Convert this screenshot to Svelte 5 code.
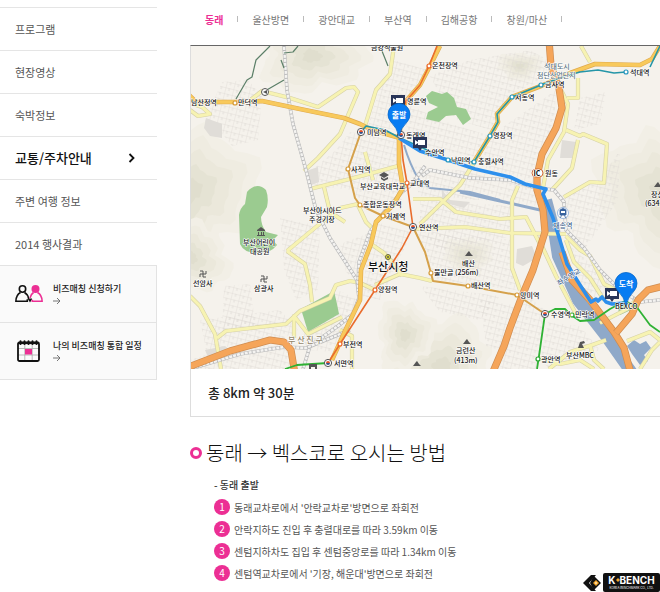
<script lang="ts">
	type Point = [number, number];

	const menu = ['프로그램', '현장영상', '숙박정보', '교통/주차안내', '주변 여행 정보', '2014 행사결과'];
	const activeMenu = '교통/주차안내';

	const origins = ['동래', '울산방면', '광안대교', '부산역', '김해공항', '창원/마산'];
	let origin = $state('동래');

	const steps = [
		"동래교차로에서 '안락교차로'방면으로 좌회전",
		'안락지하도 진입 후 충렬대로를 따라 3.59km 이동',
		'센텀지하차도 집입 후 센텀중앙로를 따라 1.34km 이동',
		"센텀역교차로에서 '기장, 해운대'방면으로 좌회전"
	];

	// blocks of small streets, filled with a rotated grid pattern
	const blocks = [
		'M222 82L248 80L262 96L258 140L232 146L218 128L204 124L212 104Z',
		'M430 76L470 60L530 50L548 60L545 80L510 94L490 130L452 118Z',
		'M394 60L428 70L400 106L398 130L368 126L378 94Z',
		'M400 100L440 120L490 136L480 158L440 150L410 140Z',
		'M490 136L556 90L554 128L538 160L536 184L480 166Z',
		'M350 132L396 140L402 200L370 212L352 190L314 186L312 170L336 150Z',
		'M408 166L480 172L534 190L538 206L480 200L420 196Z',
		'M420 200L510 206L512 236L440 250L420 232Z',
		'M376 222L412 232L380 300L362 296L368 250Z',
		'M416 232L512 240L516 290L436 280Z',
		'M480 300L520 306L506 352L486 346Z',
		'M520 290L545 310L537 369L500 369Z',
		'M548 322L580 326L600 350L550 369L540 360Z',
		'M560 196L600 180L620 150L618 200L584 250L568 230Z',
		'M280 218L320 226L318 290L296 300L284 270Z',
		'M200 320L280 310L298 330L284 338L206 350Z',
		'M224 286L250 284L256 330L222 330Z',
		'M190 360L220 350L286 344L292 369L190 369Z',
		'M338 290L358 300L350 324L330 352L310 350L300 338Z',
		'M580 98L606 92L600 124L574 130Z',
		'M340 244L372 232L360 285L346 272Z',
		'M420 286L500 296L480 320L440 312Z',
		'M570 246L610 280L600 300L582 290Z'
	];

	const yellowRoads = [
		'M190 110L198 116L210 114L202 107L190 103',
		'M248 102L262 91L290 98L318 107L346 88L354 87L358 92L340 134L318 158L304 171',
		'M394 46L390 74L376 90L365 126',
		'M310 189L350 179L398 166',
		'M324 187L330 212L345 222',
		'M287 251L322 222L340 208L358 204',
		'M365 152L370 170L373 180',
		'M190 296L200 306L215 334L221 369',
		'M217 338L226 331L286 324L300 311L330 298L336 285L350 281L360 283L375 290',
		'M287 251L305 264L310 285L312 302',
		'M294 338V316L308 334L342 317',
		'M375 285L400 274L420 278L432 281',
		'M371 244L384 253L392 262L402 276',
		'M340 330L352 336L352 369',
		'M474 163L460 185L420 224',
		'M413 199L440 199L456 212L500 219L526 217L541 246',
		'M413 229L465 227L510 233L566 234',
		'M518 186L512 200L512 268L520 290',
		'M358 205L366 222L374 230',
		'M566 130L580 136L583 134L607 144L604 183L590 182L564 197',
		'M578 140L572 168L552 190',
		'M556 80L568 104L564 132L548 160L543 188',
		'M581 46L590 62M578 78L578 98L567 98',
		'M541 244L556 276L578 318',
		'M566 240L574 262L590 278L604 300',
		'M566 236L580 250L590 256L604 284L620 292',
		'M600 323L627 309L640 296',
		'M549 369L570 352L592 345L606 340',
		'M538 358L560 364L580 360L594 369',
		'M640 369L652 350L660 342M590 345L594 360L604 369',
		'M627 341L650 332L660 340'
	];

	const goldRoads = [
		'M186 92L196 102L240 102L262 101L300 109L344 118L360 124L372 130L400 138',
		'M399 136L399 164L403 188L393 205L376 222L371 244L361 270L360 300L345 331L332 360',
		'M440 46L430 66L420 85L406 101L400 116L400 136',
		'M474 162L490 136L498 122L497 114L512 97L541 86L562 76L595 64L640 65L652 59L660 46'
	];

	const highways = [
		'M549 40L551 66L559 88L562 108L556 128L542 154L537 176L537 190L543 210L545 232L533 270L522 296L510 328L504 346L492 374',
		'M562 252L572 280L590 300L614 332L624 348L631 374',
		'M616 333L632 314L638 300L648 290L664 286',
		'M186 368L230 351L270 340L284 342L291 350L295 374'
	];

	const railways = [
		'M284 46L287 90L293 124L306 170L316 210L330 238L357 280L359 298L353 314L338 326L310 346L303 369',
		'M425 166L412 184L402 192L384 212L370 232L359 262L358 290',
		'M422 176L430 170L470 178L510 180L536 188L554 190L564 202L566 230L584 248L600 270L620 290L640 302L660 300',
		'M190 369L240 354L284 347L306 348L350 330'
	];

	// centre, radii and a phase that makes each outline irregular
	const hills = [
		{ x: 312, y: 56, rx: 52, ry: 36, phase: 1 },
		{ x: 190, y: 190, rx: 62, ry: 70, phase: 2 },
		{ x: 662, y: 192, rx: 62, ry: 68, phase: 4 },
		{ x: 468, y: 256, rx: 24, ry: 20, phase: 3 },
		{ x: 442, y: 366, rx: 52, ry: 46, phase: 5 },
		{ x: 405, y: 335, rx: 28, ry: 34, phase: 2 },
		{ x: 190, y: 258, rx: 40, ry: 34, phase: 6 },
		{ x: 520, y: 66, rx: 22, ry: 14, phase: 3 }
	];
	const hillLevels = [
		{ scale: 1, fill: '#f2efe6' },
		{ scale: 0.8, fill: '#efece1' },
		{ scale: 0.6, fill: '#ebe8db' },
		{ scale: 0.38, fill: '#e5e3d4' },
		{ scale: 0.18, fill: '#e0dece' }
	];

	function hillPath(x: number, y: number, rx: number, ry: number, phase: number) {
		const points = [];
		for (let i = 0; i < 48; i++) {
			const a = (i / 48) * Math.PI * 2;
			const r = 1 + 0.12 * Math.sin(3 * a + phase) + 0.09 * Math.sin(7 * a + phase * 2) + 0.05 * Math.sin(13 * a);
			points.push(`${(x + Math.cos(a) * rx * r).toFixed(1)} ${(y + Math.sin(a) * ry * r).toFixed(1)}`);
		}
		return 'M' + points.join('L') + 'Z';
	}

	const stations: { at: Point; color: string }[] = [
		{ at: [235, 103], color: '#d59a36' },
		{ at: [429, 66], color: '#ea6422' },
		{ at: [348, 169], color: '#d59a36' },
		{ at: [360, 205], color: '#d59a36' },
		{ at: [383, 216], color: '#d59a36' },
		{ at: [407, 183], color: '#ea6422' },
		{ at: [375, 290], color: '#ea6422' },
		{ at: [340, 344], color: '#ea6422' },
		{ at: [431, 273], color: '#d59a36' },
		{ at: [468, 286], color: '#d59a36' },
		{ at: [517, 295], color: '#d59a36' },
		{ at: [541, 85], color: '#2596be' },
		{ at: [512, 97], color: '#2596be' },
		{ at: [626, 72], color: '#2596be' },
		{ at: [490, 136], color: '#2596be' },
		{ at: [474, 162], color: '#2596be' },
		{ at: [448, 160], color: '#2596be' },
		{ at: [538, 359], color: '#27a72e' },
		{ at: [572, 315], color: '#27a72e' }
	];

	const transfers: Point[] = [
		[361, 132],
		[401, 135],
		[413, 227],
		[328, 363],
		[545, 314]
	];

	const labels: { at: Point; text: string }[] = [
		{ at: [371, 50], text: '금강식물원' },
		{ at: [432, 68], text: '온천장역' },
		{ at: [191, 105], text: '남산정역' },
		{ at: [238, 105], text: '만덕역' },
		{ at: [407, 104], text: '명륜역' },
		{ at: [630, 75], text: '석대역' },
		{ at: [545, 87], text: '금사역' },
		{ at: [515, 100], text: '서동역' },
		{ at: [367, 135], text: '미남역' },
		{ at: [406, 138], text: '동래역' },
		{ at: [493, 138], text: '명장역' },
		{ at: [425, 155], text: '수안역' },
		{ at: [451, 163], text: '낙민역' },
		{ at: [478, 164], text: '충렬사역' },
		{ at: [351, 172], text: '사직역' },
		{ at: [410, 186], text: '교대역' },
		{ at: [360, 189], text: '부산교육대학교' },
		{ at: [545, 176], text: '원동' },
		{ at: [363, 207], text: '종합운동장역' },
		{ at: [303, 213], text: '부산아시아드' },
		{ at: [309, 222], text: '주경기장' },
		{ at: [386, 219], text: '거제역' },
		{ at: [419, 230], text: '연산역' },
		{ at: [243, 245], text: '부산어린이' },
		{ at: [250, 254], text: '대공원' },
		{ at: [193, 286], text: '선암사' },
		{ at: [254, 291], text: '삼광사' },
		{ at: [378, 292], text: '양정역' },
		{ at: [343, 347], text: '부전역' },
		{ at: [334, 366], text: '서면역' },
		{ at: [462, 266], text: '배산' },
		{ at: [434, 275], text: '물만골' },
		{ at: [471, 288], text: '배산역' },
		{ at: [520, 298], text: '망미역' },
		{ at: [551, 317], text: '수영역' },
		{ at: [575, 317], text: '민락역' },
		{ at: [456, 353], text: '금련산' },
		{ at: [541, 362], text: '광안역' },
		{ at: [566, 358], text: '부산MBC' },
		{ at: [651, 197], text: '장산' }
	];

	const heights: { at: Point; text: string }[] = [
		{ at: [455, 275], text: '(256m)' },
		{ at: [454, 363], text: '(413m)' },
		{ at: [645, 206], text: '(634m)' }
	];

	const peaks: Point[] = [
		[469, 256],
		[467, 344],
		[417, 366],
		[658, 187]
	];

	const temples: Point[] = [
		[203, 274],
		[264, 279]
	];

	const cameras: Point[] = [
		[398, 101],
		[420, 143],
		[612, 294]
	];

	const pins: { at: Point; text: string }[] = [
		{ at: [399, 115], text: '출발' },
		{ at: [626, 284], text: '도착' }
	];
</script>

<div class="page">
	<aside class="side">
		<nav>
			<ul class="menu">
				{#each menu as item}
					<li class="menu__item">
						<a class="menu__link" class:menu__link--active={item === activeMenu} href="#menu">
							{item}
							{#if item === activeMenu}
								<svg class="menu__arrow" viewBox="0 0 8 10" aria-hidden="true">
									<path d="M1.5 1L5.5 5L1.5 9" fill="none" stroke="#111" stroke-width="1.8" />
								</svg>
							{/if}
						</a>
					</li>
				{/each}
			</ul>
		</nav>

		<a class="banner" href="#apply">
			<svg class="banner__icon" viewBox="0 0 28 24" aria-hidden="true">
				<g fill="none" stroke-width="1.6">
					<circle cx="7.5" cy="7" r="3.200" stroke="#111" />
					<path d="M5.500 10.500Q1 13 0.900 19.200H12.300V17.300M9.500 10.500Q13 12.500 13.500 16.500L15 19L16.500 16.500" stroke="#111" />
					<path d="M18.500 10.500Q15.500 12.500 15 16M22.500 10.500Q27 13 27.100 19.200H17.300V17.800" stroke="#ec2f94" />
				</g>
				<circle cx="20.5" cy="7" r="4" fill="#ec2f94" />
			</svg>
			<span class="banner__text">
				비즈매칭 신청하기
				<svg class="banner__arrow" viewBox="0 0 8 8" aria-hidden="true">
					<path d="M0 4H7M4 1L7 4L4 7" fill="none" stroke="#666" stroke-width="0.9" />
				</svg>
			</span>
		</a>
		<a class="banner" href="#calendar">
			<svg class="banner__icon" viewBox="0 0 28 24" aria-hidden="true">
				<path d="M3 9.500H24M3 16H24M9.800 5V21M17.200 5V21" stroke="#aaa" stroke-width="0.8" />
				<rect x="10" y="10" width="7" height="5.500" fill="#ec2f94" />
				<rect x="3" y="3.500" width="21" height="18.500" rx="1.5" fill="none" stroke="#111" stroke-width="1.8" />
				<path d="M3 4H24" stroke="#111" stroke-width="2.2" />
				<path d="M5.500 2.200V5M9.500 2.200V5M13.500 2.200V5M17.500 2.200V5M21.500 2.200V5" stroke="#111" stroke-width="2" stroke-linecap="round" />
			</svg>
			<span class="banner__text">
				나의 비즈매칭 통합 일정
				<svg class="banner__arrow" viewBox="0 0 8 8" aria-hidden="true">
					<path d="M0 4H7M4 1L7 4L4 7" fill="none" stroke="#666" stroke-width="0.9" />
				</svg>
			</span>
		</a>
	</aside>

	<main class="content">
		<div class="tabs">
			{#each origins as name}
				<button class="tabs__item" class:tabs__item--active={name === origin} onclick={() => (origin = name)}>
					{name}
				</button>
			{/each}
		</div>

		<section class="route">
			<svg class="map" viewBox="191 46 469 323" preserveAspectRatio="xMinYMin slice" role="img" aria-label="동래 → 벡스코">
				<defs>
					<pattern id="streets" width="8" height="6" patternUnits="userSpaceOnUse" patternTransform="rotate(14)">
						<path d="M0 0H8M0 0V6M4 0V3" fill="none" stroke="#dedbd6" stroke-width="0.8" />
					</pattern>
				</defs>
				<rect x="190" y="46" width="471" height="324" fill="#f5f2ec" />

				{#each hills as { x, y, rx, ry, phase }}
					{#each hillLevels as { scale, fill }}
						<path d={hillPath(x, y, rx * scale, ry * scale, phase)} {fill} />
					{/each}
				{/each}

				{#each blocks as d}
					<path {d} fill="url(#streets)" />
				{/each}

				<g fill="#9bcb90">
					<path d="M247 192Q257 181 266 190Q269 198 267 207L261 217Q261 225 266 232L278 235L273 240L277 245Q270 254 257 253Q244 253 240 244L239 215Q240 208 245 204Z" />
					<path d="M301 309L334 291L337 304L339 314L308 332Z" />
					<path d="M426 96L432 91L442 94L447 92L454 98L457 107L466 109L471 119L463 125L456 115L446 116L439 122L426 119L428 112L438 107L429 103Z" />
					<path d="M617 306L627 302L633 309L620 315Z" />
				</g>
				<g fill="#e0ddd8">
					<path d="M562 140L576 142L572 158L560 158Z" />
					<path d="M517 249L532 246L537 258L523 266L516 263Z" />
					<path d="M306 171L318 167L319 182L309 186Z" />
					<path d="M206 118L222 124L222 138L210 136L204 128Z" />
					<path d="M205 350L225 346L232 352L210 362Z" />
					<path d="M442 190L450 200L470 202L464 208L442 202Z" />
				</g>

				<g fill="none" stroke="#8fa9c9">
					<path d="M404 145Q410 165 419 180L430 188L470 192L500 200" stroke-width="2" />
					<path d="M460 192L500 201L540 210" stroke-width="3" />
					<path d="M546 200L554 230L558 256L578 300L606 336L634 376" stroke-width="12" />
				</g>
				<path d="M627 346L634 340L640 344L646 341L651 348L644 355L648 361L640 365L632 354Z" fill="#8fa9c9" />

				<g fill="none" stroke="#d6d1a8" stroke-width="4.2" stroke-linejoin="round">
					{#each yellowRoads as d}<path {d} />{/each}
				</g>
				<g fill="none" stroke="#f7f3b2" stroke-width="3" stroke-linejoin="round">
					{#each yellowRoads as d}<path {d} />{/each}
				</g>

				<g fill="none" stroke-linejoin="round">
					{#each railways as d}
						<path {d} stroke="#bcbcbc" stroke-width="3.6" />
						<path {d} stroke="#f4f3f1" stroke-width="2.4" />
						<path {d} stroke="#bcbcbc" stroke-width="3" stroke-dasharray="1 3" />
					{/each}
					{#each goldRoads as d}
						<path {d} stroke="#dfaa4f" stroke-width="4.6" />
						<path {d} stroke="#f8c95c" stroke-width="3.4" />
					{/each}
					{#each highways as d}
						<path {d} stroke="#cf8c50" stroke-width="7.2" />
						<path {d} stroke="#f5a55a" stroke-width="5.8" />
					{/each}
				</g>

				<g fill="none" stroke-linejoin="round">
					<path d="M270 46L256 60L252 77L247 80L236 99M265 91L284 80M284 68L281 60M284 53L293 52L298 46M382 51L388 66" stroke="#5b7f68" stroke-width="1.2" />
					<path d="M361 132L348 169L355 198L360 205L383 216L413 227L425 252L431 273L433 281L468 286L517 295L545 314" stroke="#d5a14b" stroke-width="2" />
					<path d="M437 46L429 66L420 85L406 101L401 116L401 135L403 160L407 183L413 227L402 248L375 290L340 344L328 363" stroke="#e96c2c" stroke-width="1.6" />
					<path d="M361 132L366 126L385 130L400 138L425 149L448 160L474 162L490 136L498 122L497 114L512 97L541 85L562 77L580 72L598 70L614 73L626 72M650 67L660 46" stroke="#2596a8" stroke-width="1.6" />
					<path d="M285 369L297 365L328 363M537 369L539 356L545 314L555 309L565 309L571 315L580 321L594 320L610 309L625 301L636 306L650 325L660 332" stroke="#2fb234" stroke-width="1.8" />
				</g>

				<path
					d="M399 138L420 151L448 160L475 169L510 177L525 184L546 189L543 194L553 218L562 247L567 264L580 285L591 302L596 299L598 301L602 297L606 302L612 304L625 303"
					fill="none"
					stroke="#2d8fec"
					stroke-width="3.6"
					stroke-linejoin="round"
				/>

				{#each stations as { at, color }}
					<circle cx={at[0]} cy={at[1]} r="2" fill="#fff" stroke={color} stroke-width="1.2" />
				{/each}
				{#each transfers as [x, y]}
					<circle cx={x} cy={y} r="3.6" fill="#fff" stroke="#555" />
					<path d="M{x - 2} {y}A2 2 0 0 1 {x + 2} {y}Z" fill="#e55228" />
					<path d="M{x - 2} {y}A2 2 0 0 0 {x + 2} {y}Z" fill="#345189" />
				{/each}

				<!-- landmarks -->
				<g fill="#555">
					{#each peaks as [x, y]}
						<path d="M{x - 4} {y}L{x - 1} {y - 4}L{x} {y - 5}L{x + 2} {y - 2}L{x + 4} {y}Z" />
					{/each}
					{#each temples as [x, y]}
						<path
							d="M{x - 3} {y - 3}H{x}V{y + 3}H{x + 3}M{x + 3} {y - 3}V{y}H{x - 3}V{y + 3}"
							fill="none"
							stroke="#555"
						/>
					{/each}
					<path d="M379 175L384 172L389 175L384 178ZM381 177L384 179L388 177V179L384 181L381 179Z" />
					<path d="M257 230L261 227L265 230V231H257ZM257 235H265V236H257ZM258 232H259V235H258ZM261 232H262V235H261ZM263 232H264V235H263Z" />
					<path d="M578 348L580 342L584 341L585 343L582 344L584 348ZM585 341V347" />
					<path d="M309 364H317V369H315V367H311V369H309Z" />
				</g>
				<circle cx="265" cy="92" r="3.5" fill="#fff" stroke="#555" />
				<path d="M263 92L267 90V94Z" fill="#555" />
				<circle cx="388" cy="257" r="2.5" fill="#e5df35" stroke="#666648" />
				<circle cx="388" cy="257" r="1" fill="#555" />
				<circle cx="563" cy="213" r="5.5" fill="#fff" stroke="#9eb9dd" />
				<path d="M560 210Q563 207 566 210V215H560ZM560 218L562 215M566 218L564 215" fill="#37629e" stroke="#37629e" stroke-width="0.8" />
				<path d="M561 211H565V213H561Z" fill="#fff" />
				<rect x="532" y="169" width="11" height="8" rx="4" fill="#fff" stroke="#d16d38" />
				<text x="537" y="176" class="map__label map__label--ic">IC</text>

				{#each labels as { at, text }}
					<text x={at[0]} y={at[1]} class="map__label">{text}</text>
				{/each}
				{#each heights as { at, text }}
					<text x={at[0]} y={at[1]} class="map__label map__label--height">{text}</text>
				{/each}
				<text x="368" y="271" class="map__label map__label--city">부산시청</text>
				<text x="288" y="343" class="map__label map__label--district">부 산 진 구</text>
				<text x="544" y="69" class="map__label map__label--area">석대도시</text>
				<text x="537" y="78" class="map__label map__label--area">첨단산업단지</text>
				<text x="553" y="228" class="map__label map__label--water">재송역</text>
				<text x="559" y="286" class="map__label map__label--water" transform="rotate(-32 559 286)">좌수영교</text>
				<text x="615" y="309" class="map__label map__label--height">BEXCO</text>

				{#each cameras as [x, y]}
					<path d="M{x - 7} {y - 6}H{x + 7}V{y + 5}H{x + 2}L{x} {y + 8}L{x - 2} {y + 5}H{x - 7}Z" fill="#293558" />
					<path d="M{x - 2} {y - 3}H{x + 5}V{y + 2}H{x - 2}ZM{x - 5} {y - 3}L{x - 2} {y - 1}V{y}L{x - 5} {y + 2}Z" fill="#fff" />
				{/each}
				{#each pins as { at, text }}
					<path
						d="M{at[0]} {at[1] + 21}Q{at[0] - 2} {at[1] + 13} {at[0] - 8} {at[1] + 7}A11 11 0 1 1 {at[0] + 8} {at[1] + 7}Q{at[0] + 2} {at[1] + 13} {at[0]} {at[1] + 21}Z"
						fill="#087cf2"
						stroke="#0868ca"
						stroke-width="0.8"
					/>
					<text x={at[0]} y={at[1] + 3} class="map__pin">{text}</text>
				{/each}
			</svg>
			<p class="route__total">총 8km 약 30분</p>
		</section>

		<section class="guide">
			<h2 class="guide__title">동래 → 벡스코로 오시는 방법</h2>
			<h3 class="guide__from">- 동래 출발</h3>
			<ol class="guide__steps">
				{#each steps as step, i}
					<li class="guide__step"><span class="guide__number">{i + 1}</span>{step}</li>
				{/each}
			</ol>
		</section>
	</main>

	<div class="logo">
		<svg class="logo__mark" viewBox="0 0 20 18" aria-hidden="true">
			<path d="M0 9L8 1H13L6 9L13 17H8Z" fill="#111" />
			<path d="M11 2L18 9L11 16L9 13L7 9L9 5Z" fill="#111" />
			<path d="M13 6L16 9L13 12L10 9Z" fill="#f4a72c" />
			<path d="M13 8L14 9L13 10L12 9Z" fill="#fff" />
		</svg>
		<div class="logo__plate">
			<span class="logo__name">
				K<svg class="logo__dot" viewBox="0 0 4 4" aria-hidden="true"><path d="M2 0L4 2L2 4L0 2Z" fill="#f4a72c" /></svg>BENCH
			</span>
			<span class="logo__sub">KOREA BENCHMARK CO., LTD.</span>
		</div>
	</div>
</div>

<style>
	:global(body) {
		margin: 0;
		background: #fff;
	}
	.page {
		position: relative;
		display: flex;
		gap: 33px;
		min-height: 100vh;
		overflow: hidden;
		font-family: 'Noto Sans CJK KR', sans-serif;
		font-size: 10px;
		color: #555;
	}
	.side {
		flex: 0 0 157px;
		padding-top: 7px;
	}
	.menu {
		margin: 0;
		padding: 0;
		list-style: none;
	}
	.menu__item {
		border-top: 1px solid #e5e5e5;
	}
	.menu__link {
		display: flex;
		align-items: center;
		justify-content: space-between;
		height: 42px;
		padding: 0 21px 0 15px;
		font-size: 11px;
		line-height: 16px;
		color: #555;
		text-decoration: none;
	}
	.menu__link--active {
		font-size: 13px;
		font-weight: 500;
		color: #111;
	}
	.menu__arrow {
		width: 8px;
		height: 10px;
	}
	.banner {
		display: flex;
		align-items: center;
		gap: 10px;
		height: 56px;
		padding-left: 15px;
		border: 1px solid #e3e3e3;
		border-left: 0;
		border-bottom: 0;
		background: #fafafa;
		color: #222;
		text-decoration: none;
	}
	.banner:last-child {
		border-bottom: 1px solid #e3e3e3;
	}
	.banner__icon {
		width: 28px;
		height: 24px;
	}
	.banner__text {
		font-size: 9px;
		font-weight: 500;
		line-height: 12px;
		white-space: nowrap;
	}
	.banner__arrow {
		display: block;
		width: 8px;
		height: 8px;
		margin-top: 2px;
	}
	.content {
		flex: 1;
		min-width: 0;
	}
	.tabs {
		display: flex;
		align-items: center;
		height: 38px;
		padding: 0 0 7px 15px;
		white-space: nowrap;
	}
	.tabs__item {
		display: flex;
		align-items: center;
		padding: 0;
		border: 0;
		background: none;
		font: inherit;
		color: #777;
		cursor: pointer;
	}
	.tabs__item::after {
		content: '';
		width: 1px;
		height: 6px;
		margin: 0 14px;
		background: #bbb;
	}
	.tabs__item--active {
		font-weight: 700;
		color: #ec2f94;
	}
	.route {
		border: 1px solid #ddd;
		border-top: 1px solid #666;
		border-right: 0;
	}
	.map {
		display: block;
		width: 100%;
		height: 323px;
	}
	.map__label {
		font-size: 7px;
		font-weight: 500;
		fill: #111;
		stroke: #fff;
		stroke-width: 1.2px;
		stroke-linejoin: round;
		paint-order: stroke;
	}
	.map__label--height {
		font-size: 7px;
	}
	.map__label--city {
		font-size: 11px;
	}
	.map__label--district {
		font-size: 8px;
		fill: #94866a;
	}
	.map__label--area {
		font-size: 7px;
		fill: #5b7482;
	}
	.map__label--water {
		fill: #44658e;
	}
	.map__label--ic {
		font-weight: 700;
		text-anchor: middle;
	}
	.map__pin {
		font-size: 8px;
		font-weight: 700;
		fill: #fff;
		text-anchor: middle;
	}
	.route__total {
		margin: 0;
		padding: 0 17px;
		font-size: 13px;
		font-weight: 500;
		line-height: 47px;
		color: #222;
	}
	.guide {
		padding-top: 20px;
	}
	.guide__title {
		display: flex;
		align-items: center;
		gap: 4px;
		margin: 0;
		font-size: 20px;
		font-weight: 300;
		line-height: 32px;
		color: #111;
		white-space: nowrap;
	}
	.guide__title::before {
		content: '';
		width: 6px;
		height: 6px;
		border: 3px solid #ec2f94;
		border-radius: 50%;
	}
	.guide__from {
		margin: 7px 0 0 24px;
		font-size: 10px;
		font-weight: 500;
		line-height: 18px;
		color: #333;
	}
	.guide__steps {
		margin: 2px 0 0 24px;
		padding: 0;
		list-style: none;
	}
	.guide__step {
		display: flex;
		align-items: center;
		gap: 4px;
		height: 22px;
	}
	.guide__number {
		width: 16px;
		border-radius: 50%;
		background: #ec2f94;
		line-height: 16px;
		color: #fff;
		text-align: center;
	}
	.logo {
		position: absolute;
		right: 0;
		bottom: 0;
		display: flex;
		align-items: center;
	}
	.logo__mark {
		width: 20px;
		height: 18px;
	}
	.logo__plate {
		display: flex;
		flex-direction: column;
		align-items: center;
		justify-content: center;
		width: 57px;
		height: 19px;
		border-radius: 2px;
		background: #111;
		color: #fff;
		font-family: Inter, sans-serif;
	}
	.logo__name {
		font-size: 10px;
		font-weight: 700;
		line-height: 11px;
	}
	.logo__dot {
		width: 4px;
		height: 4px;
		margin-bottom: 2px;
	}
	.logo__sub {
		font-size: 3px;
		line-height: 4px;
	}
</style>
